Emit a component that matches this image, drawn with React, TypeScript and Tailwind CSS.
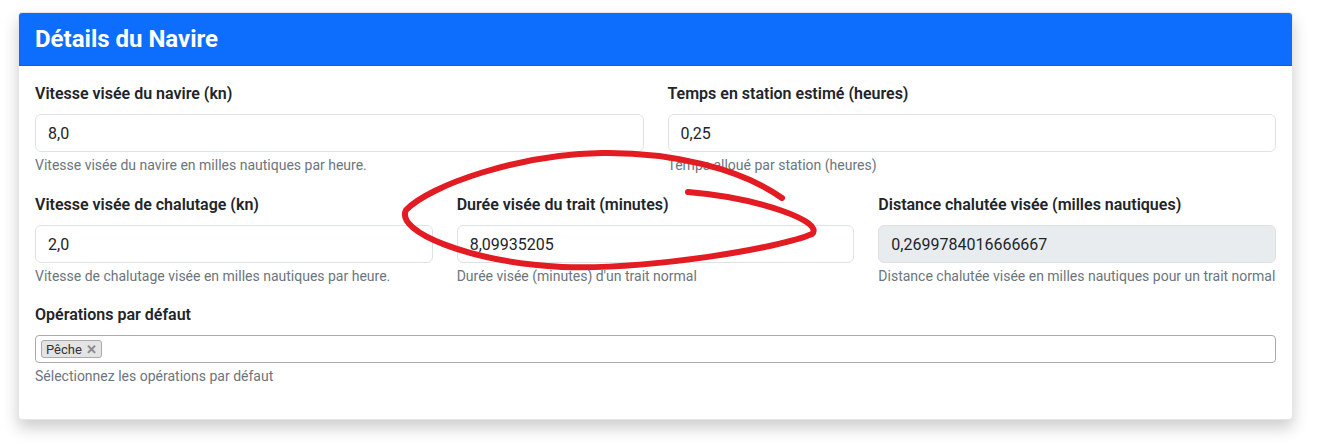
import React from 'react'

const font = { fontFamily: 'Roboto, "Liberation Sans", sans-serif' }

type FieldProps = {
  label: string
  value: string
  help: string
  disabled?: boolean
}

function Field({ label, value, help, disabled }: FieldProps) {
  return (
    <div className="min-w-0">
      <label className="block mb-2 text-[16px] leading-6 font-semibold text-[#212529]">{label}</label>
      <input
        readOnly
        value={value}
        className={`block w-full h-[38px] px-3 text-[16px] text-[#212529] border border-[#dee2e6] rounded-[6px] outline-none ${
          disabled ? 'bg-[#e9ecef]' : 'bg-white'
        }`}
        style={font}
      />
      <div className="mt-[3px] text-[14px] leading-[21px] text-[#6c757d] whitespace-nowrap">{help}</div>
    </div>
  )
}

export default function App() {
  return (
    <div className="relative w-[1318px] h-[447px] bg-white overflow-hidden" style={font}>
      <div className="ml-[18px] mt-[12px] w-[1275px] bg-white border border-black/10 rounded-[4px] shadow-[0_8px_16px_rgba(0,0,0,0.2)] overflow-hidden">
        {/* Card header */}
        <div className="bg-[#0d6efd] px-4 h-[53px] flex items-center border-b border-black/10">
          <h5 className="text-[24px] font-bold text-white leading-7">Détails du Navire</h5>
        </div>

        {/* Card body */}
        <div className="px-4 pt-4 pb-4">
          <div className="grid grid-cols-2 gap-x-6 mb-[17px]">
            <Field
              label="Vitesse visée du navire (kn)"
              value="8,0"
              help="Vitesse visée du navire en milles nautiques par heure."
            />
            <Field
              label="Temps en station estimé (heures)"
              value="0,25"
              help="Temps alloué par station (heures)"
            />
          </div>

          <div className="grid grid-cols-3 gap-x-6 mb-4">
            <Field
              label="Vitesse visée de chalutage (kn)"
              value="2,0"
              help="Vitesse de chalutage visée en milles nautiques par heure."
            />
            <Field
              label="Durée visée du trait (minutes)"
              value="8,09935205"
              help="Durée visée (minutes) d'un trait normal"
            />
            <Field
              label="Distance chalutée visée (milles nautiques)"
              value="0,2699784016666667"
              help="Distance chalutée visée en milles nautiques pour un trait normal"
              disabled
            />
          </div>

          <div className="mb-4">
            <label className="block mb-2 text-[16px] leading-6 font-semibold text-[#212529]">Opérations par défaut</label>
            <div className="h-[28px] border border-[#aaaaaa] rounded-[4px] flex items-center px-[5px]">
              <span className="flex items-center h-[18px] px-[4px] bg-[#e4e4e4] border border-[#aaaaaa] rounded-[3px] text-[13px] text-[#333] leading-none">
                Pêche
                <span className="ml-[4px] text-[#888] font-bold text-[13px]">✕</span>
              </span>
            </div>
            <div className="mt-[3px] text-[14px] leading-[21px] text-[#6c757d]">Sélectionnez les opérations par défaut</div>
          </div>
        </div>
      </div>

      {/* Hand-drawn annotation */}
      <svg className="absolute left-0 top-0 pointer-events-none" width="1318" height="447" viewBox="0 0 1318 447">
        <path
          d="M782 198 C 740 168, 670 152, 602 153 C 520 154, 430 185, 406 210 C 395 232, 470 262, 562 267 C 650 270, 780 248, 812 234 C 825 222, 760 198, 688 192"
          fill="none"
          stroke="#e31b23"
          strokeWidth="6"
          strokeLinecap="round"
          strokeLinejoin="round"
        />
      </svg>
    </div>
  )
}
